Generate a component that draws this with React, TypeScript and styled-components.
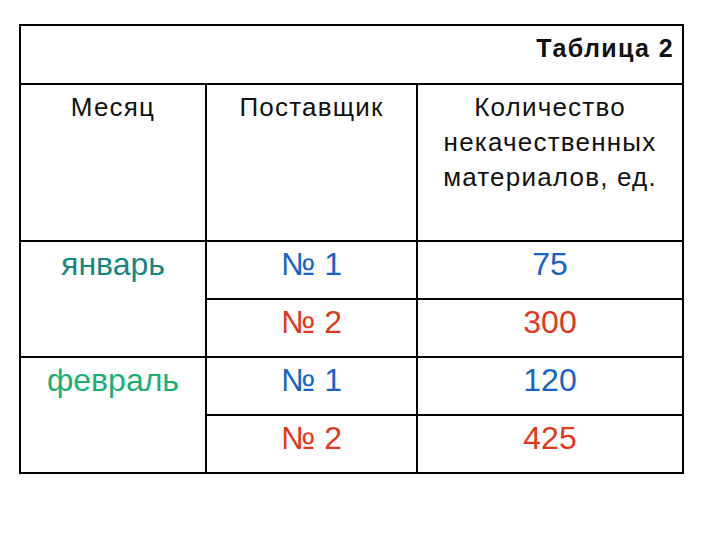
import styled, { createGlobalStyle } from 'styled-components';

const GlobalStyle = createGlobalStyle`
  body {
    margin: 0;
    background: #ffffff;
    font-family: "Liberation Sans", Arial, sans-serif;
  }
`;

const Page = styled.div`
  width: 720px;
  height: 540px;
  padding: 24px 0 0 19px;
  box-sizing: border-box;
`;

const Table = styled.table`
  border-collapse: collapse;
  width: 665px;
  border: 2px solid #000;
  table-layout: fixed;
`;

const TitleCell = styled.td`
  height: 45px;
  padding: 0 8px 12px 0;
  text-align: right;
  vertical-align: middle;
  font-weight: bold;
  font-size: 25px;
  letter-spacing: 1.4px;
  color: #111;
  border-bottom: 2px solid #000;
`;

const HeadCell = styled.th`
  height: 150px;
  padding: 5px 4px 0;
  vertical-align: top;
  text-align: center;
  font-weight: normal;
  font-size: 26px;
  letter-spacing: 1.2px;
  line-height: 35px;
  color: #111;
  border: 2px solid #000;
`;

const Cell = styled.td<{ $color: string }>`
  height: 52px;
  padding: 4px 0 0;
  vertical-align: top;
  text-align: center;
  font-size: 32px;
  line-height: 36px;
  color: ${(p) => p.$color};
  border: 2px solid #000;
`;

const BLUE = '#1763c6';
const RED = '#e0381c';

const rows = [
  { month: 'январь', monthColor: '#16887f', items: [['№ 1', '75'], ['№ 2', '300']] },
  { month: 'февраль', monthColor: '#1ab073', items: [['№ 1', '120'], ['№ 2', '425']] },
];

export default function App() {
  return (
    <>
      <GlobalStyle />
      <Page>
        <Table>
          <colgroup>
            <col style={{ width: 186 }} />
            <col style={{ width: 211 }} />
            <col style={{ width: 266 }} />
          </colgroup>
          <tbody>
            <tr>
              <TitleCell colSpan={3}>Таблица 2</TitleCell>
            </tr>
            <tr>
              <HeadCell>Месяц</HeadCell>
              <HeadCell>Поставщик</HeadCell>
              <HeadCell>
                Количество
                <br />
                некачественных
                <br />
                материалов, ед.
              </HeadCell>
            </tr>
            {rows.map((r) =>
              r.items.map(([supplier, count], i) => {
                const color = i === 0 ? BLUE : RED;
                return (
                  <tr key={r.month + i}>
                    {i === 0 && (
                      <Cell rowSpan={2} $color={r.monthColor}>
                        {r.month}
                      </Cell>
                    )}
                    <Cell $color={color}>{supplier}</Cell>
                    <Cell $color={color}>{count}</Cell>
                  </tr>
                );
              })
            )}
          </tbody>
        </Table>
      </Page>
    </>
  );
}
